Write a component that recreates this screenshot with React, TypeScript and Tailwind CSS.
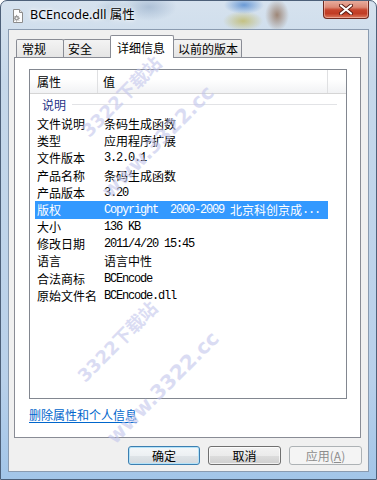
import React from "react";

const CJK = "font-['Noto_Sans_CJK_SC',sans-serif]";
const MONO = "font-['Liberation_Mono',monospace] text-[12px] tracking-[-1.2px]";

type Row = { name: string; value: React.ReactNode; selected?: boolean };

const rows: Row[] = [
  { name: "文件说明", value: <span>条码生成函数</span> },
  { name: "类型", value: <span>应用程序扩展</span> },
  { name: "文件版本", value: <span className={MONO}>3.2.0.1</span> },
  { name: "产品名称", value: <span>条码生成函数</span> },
  { name: "产品版本", value: <span className={MONO}>3.20</span> },
  {
    name: "版权",
    selected: true,
    value: (
      <>
        <span className={MONO}>Copyright  2000-2009 </span>
        <span>北京科创京成</span>
        <span className={MONO}>...</span>
      </>
    ),
  },
  { name: "大小", value: <span className={MONO}>136 KB</span> },
  { name: "修改日期", value: <span className={MONO}>2011/4/20 15:45</span> },
  { name: "语言", value: <span>语言中性</span> },
  { name: "合法商标", value: <span className={MONO}>BCEncode</span> },
  { name: "原始文件名", value: <span className={MONO}>BCEncode.dll</span> },
];

function DllIcon() {
  return (
    <svg width="12" height="14" viewBox="0 0 12 14">
      <path d="M1.5 0.5h6l3 3v10h-9z" fill="#fdfdfd" stroke="#8c8c8c" />
      <path d="M7.5 0.5v3h3" fill="#e6e6e6" stroke="#8c8c8c" />
      <circle cx="4.6" cy="9.2" r="2.4" fill="#9a9a9a" />
      <circle cx="4.6" cy="9.2" r="1" fill="#f4f4f4" />
      <path d="M4.6 5.9v1M4.6 11.5v1M1.3 9.2h1M6.9 9.2h1M2.3 6.9l.7.7M6.2 10.8l.7.7M2.3 11.5l.7-.7M6.2 7.6l.7-.7" stroke="#8a8a8a" strokeWidth="1" />
    </svg>
  );
}

export default function App() {
  return (
    <div
      className={`relative w-[377px] h-[480px] overflow-hidden flex flex-col border border-[#4d6079] rounded-t-[7px] bg-[linear-gradient(180deg,#d6e2ee_0px,#c6d8ea_80px,#b8d0ea_380px,#a2c5e8_480px)] ${CJK} text-[12px] text-black`}
    >
      {/* Title bar */}
      <div className="h-[28px] flex items-start bg-[radial-gradient(ellipse_28px_14px_at_148px_6px,rgba(140,165,195,0.55),transparent),radial-gradient(ellipse_20px_9px_at_243px_4px,rgba(70,130,205,0.75),transparent),radial-gradient(ellipse_20px_10px_at_242px_20px,rgba(190,180,85,0.7),transparent),radial-gradient(ellipse_12px_16px_at_276px_14px,rgba(140,105,80,0.75),transparent),radial-gradient(ellipse_20px_12px_at_112px_10px,rgba(150,175,200,0.45),transparent)]">
        <div className="pl-[11px] pt-[8px]">
          <DllIcon />
        </div>
        <div className="ml-[6px] pt-[6px] leading-[16px] text-[12.5px] font-['Noto_Sans','Noto_Sans_CJK_SC',sans-serif] [text-shadow:0_0_6px_#fff,0_0_3px_#fff]">
          BCEncode.dll 属性
        </div>
        <div className="ml-auto mr-[7px] -mt-[1px] w-[46px] h-[19px] rounded-b-[4px] border border-t-0 border-[#6e2a20] bg-[linear-gradient(180deg,#eab1a3_0%,#dc8a76_40%,#c7452d_55%,#c13c24_75%,#dc7a5e_100%)] shadow-[inset_0_0_0_1px_rgba(255,220,210,0.45)] flex items-center justify-center">
          <svg width="14" height="11" viewBox="0 0 14 11">
            <path d="M2 1.5l10 8M12 1.5l-10 8" stroke="#5a1d15" strokeWidth="4" strokeLinecap="round" />
            <path d="M2 1.5l10 8M12 1.5l-10 8" stroke="#ffffff" strokeWidth="2.2" strokeLinecap="round" />
          </svg>
        </div>
      </div>

      {/* Client area */}
      <div className="mx-[7px] h-[443px] border border-[#8a9bb0] bg-[#f0f0f0] flex flex-col">
        {/* Tabs */}
        <div className="mt-[5px] h-[22px] pl-[7px] flex items-end relative z-10">
          <div className="w-[48px] h-[18px] border border-b-0 border-[#898c95] rounded-t-[2px] bg-[linear-gradient(180deg,#f3f3f3,#e5e5e5)] pl-[5px] flex items-center leading-none">
            常规
          </div>
          <div className="-ml-[1px] w-[49px] h-[18px] border border-b-0 border-[#898c95] rounded-t-[2px] bg-[linear-gradient(180deg,#f3f3f3,#e5e5e5)] pl-[4px] flex items-center leading-none">
            安全
          </div>
          <div className="-ml-[2px] w-[64px] h-[23px] -mb-[1px] relative z-10 border border-b-0 border-[#898c95] rounded-t-[2px] bg-white pl-[6px] pt-[1px] flex items-center leading-none">
            详细信息
          </div>
          <div className="-ml-[1px] w-[69px] h-[18px] border border-b-0 border-[#898c95] rounded-t-[2px] bg-[linear-gradient(180deg,#f3f3f3,#e5e5e5)] pl-[4px] flex items-center leading-none">
            以前的版本
          </div>
        </div>

        {/* Tab panel */}
        <div className="ml-[5px] w-[347px] h-[381px] border border-[#898c95] bg-white flex flex-col">
          {/* List view */}
          <div className="ml-[14px] mt-[11px] w-[318px] h-[330px] border border-[#828790] bg-white flex flex-col">
            <div className="h-[24px] flex border-b border-[#d5d5d5] bg-[linear-gradient(180deg,#ffffff_0%,#ffffff_40%,#f1f2f4_100%)]">
              <div className="w-[68px] pl-[7px] flex items-center border-r border-[#dfe0e2]">属性</div>
              <div className="w-[230px] pl-[5px] flex items-center border-r border-[#dfe0e2]">值</div>
              <div className="flex-1" />
            </div>
            <div className="h-[21.4px] flex items-center pl-[12px] pr-[9px]">
              <span className="text-[#1e3287]">说明</span>
              <div className="flex-1 ml-[6px] h-px bg-[#e2e3e6]" />
            </div>
            {rows.map((r) => (
              <div
                key={r.name}
                className={
                  r.selected
                    ? "ml-[5px] w-[293px] h-[17.2px] flex items-center bg-[#3399ff] text-white"
                    : "ml-[5px] w-[293px] h-[17.2px] flex items-center"
                }
              >
                <div className="w-[63px] pl-[2px] whitespace-nowrap leading-none">{r.name}</div>
                <div className="pl-[6px] whitespace-pre flex items-center leading-none">{r.value}</div>
              </div>
            ))}
          </div>
          <div className="mt-[8px] ml-[14px] h-[16px] leading-[16px]">
            <span className="text-[#0066cc] underline underline-offset-2">删除属性和个人信息</span>
          </div>
        </div>

        {/* Buttons */}
        <div className="mt-[8px] pr-[6px] flex justify-end gap-[8px]">
          <div className="w-[72px] h-[19px] rounded-[3px] border border-[#3c7fb1] shadow-[inset_0_0_0_1px_#b4e2f8] bg-[linear-gradient(180deg,#f4f7f9_0%,#ecf0f3_50%,#dfe4e8_51%,#d3d9de_100%)] flex items-center justify-center leading-none">
            确定
          </div>
          <div className="w-[73px] h-[19px] rounded-[3px] border border-[#707070] shadow-[inset_0_0_0_1px_rgba(255,255,255,0.7)] bg-[linear-gradient(180deg,#f2f2f2_0%,#ebebeb_50%,#dddddd_51%,#cfcfcf_100%)] flex items-center justify-center leading-none">
            取消
          </div>
          <div className="w-[73px] h-[19px] rounded-[3px] border border-[#adb2b5] bg-[#f4f4f4] text-[#8d8d8d] flex items-center justify-center leading-none">
            应用(<span className="underline">A</span>)
          </div>
        </div>
      </div>

      {/* Watermark overlay */}
      <div className="pointer-events-none absolute inset-0 z-20 text-[#c3c6ec] opacity-60 font-bold">
        <span className="absolute left-[84px] top-[124px] origin-[0_50%] -rotate-45 whitespace-nowrap text-[18px] leading-[18px] font-['DejaVu_Sans','Noto_Sans_CJK_SC',sans-serif]">
          3322下载站
        </span>
        <span className="absolute left-[104px] top-[183px] origin-[0_50%] -rotate-45 whitespace-nowrap text-[20px] leading-[20px] font-['DejaVu_Sans',sans-serif]">
          www.3322.cc
        </span>
        <span className="absolute left-[80px] top-[369px] origin-[0_50%] -rotate-45 whitespace-nowrap text-[18px] leading-[18px] font-['DejaVu_Sans','Noto_Sans_CJK_SC',sans-serif]">
          3322下载站
        </span>
        <span className="absolute left-[109px] top-[429px] origin-[0_50%] -rotate-45 whitespace-nowrap text-[20px] leading-[20px] font-['DejaVu_Sans',sans-serif]">
          www.3322.cc
        </span>
      </div>
    </div>
  );
}
